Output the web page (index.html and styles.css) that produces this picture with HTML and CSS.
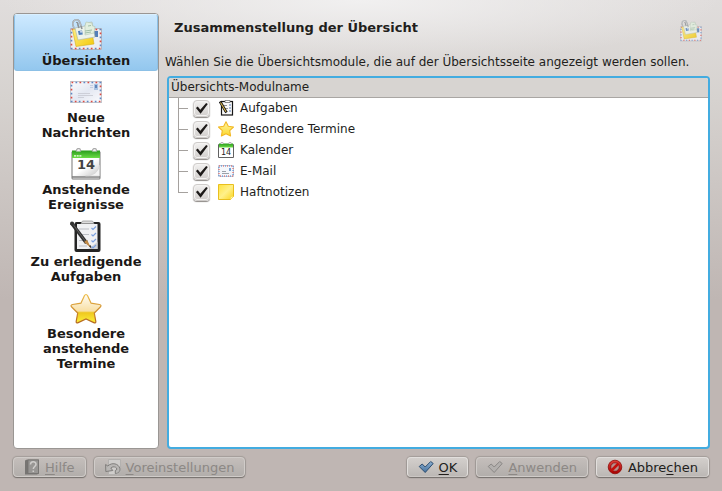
FILE: index.html
```html
<!DOCTYPE html>
<html lang="de">
<head>
<meta charset="utf-8">
<title>Zusammenstellung der Übersicht</title>
<link rel="stylesheet" href="styles.css">
</head>
<body>
<svg class="defs" aria-hidden="true">
  <defs>
    <linearGradient id="gPaper" x1="0" y1="0" x2="1" y2="1"><stop offset="0" stop-color="#fdfdfe"/><stop offset=".5" stop-color="#e4e8f2"/><stop offset="1" stop-color="#fbfbfd"/></linearGradient>
    <linearGradient id="gStar" x1="0" y1="0" x2="0" y2="1"><stop offset="0" stop-color="#fffdf4"/><stop offset=".58" stop-color="#f8dfa4"/><stop offset=".64" stop-color="#efc81e"/><stop offset="1" stop-color="#fcf03c"/></linearGradient>
    <linearGradient id="gStarEdge" x1="0" y1="0" x2="0" y2="1"><stop offset="0" stop-color="#eebd48"/><stop offset="1" stop-color="#b4661c"/></linearGradient>
    <linearGradient id="gStarSmall" x1="0" y1="0" x2="0" y2="1"><stop offset="0" stop-color="#fff3a0"/><stop offset="1" stop-color="#fbd82a"/></linearGradient>
    <linearGradient id="gGreen" x1="0" y1="0" x2="0" y2="1"><stop offset="0" stop-color="#2a9c1c"/><stop offset="1" stop-color="#6cdc46"/></linearGradient>
    <linearGradient id="gPage" x1="0" y1="0" x2="1" y2="1"><stop offset=".5" stop-color="#fff"/><stop offset="1" stop-color="#c4c4c4"/></linearGradient>
    <linearGradient id="gNote" x1="0" y1="0" x2="1" y2="1"><stop offset="0" stop-color="#ffe23c"/><stop offset=".5" stop-color="#fff08a"/><stop offset="1" stop-color="#fbd51c"/></linearGradient>
    <linearGradient id="gYellow" x1="0" y1="0" x2="1" y2="1"><stop offset="0" stop-color="#fff08c"/><stop offset="1" stop-color="#f3c908"/></linearGradient>
    <linearGradient id="gRed" x1="0" y1="0" x2="0" y2="1"><stop offset="0" stop-color="#e0403a"/><stop offset="1" stop-color="#a80000"/></linearGradient>
    <linearGradient id="gBlue" x1="0" y1="0" x2="0" y2="1"><stop offset="0" stop-color="#8fb0d0"/><stop offset="1" stop-color="#44719e"/></linearGradient>

    <symbol id="mail" viewBox="0 0 32 32">
      <rect x=".5" y="5.500" width="31" height="21" fill="url(#gPaper)" stroke="#c4c6cc"/>
      <rect x="1.500" y="6.500" width="29" height="19" fill="none" stroke="#dd4a42" stroke-width="1.600" stroke-dasharray="1.700 6.300"/>
      <rect x="1.500" y="6.500" width="29" height="19" fill="none" stroke="#5f86c4" stroke-width="1.600" stroke-dasharray="1.700 6.300" stroke-dashoffset="4"/>
      <path d="M24 8h4v6h-4z" fill="#a9c3e2"/><path d="M25 9h2v3h-2z" fill="#5f86ba"/><path d="M20 9.500h3M20 11.500h3" stroke="#b9c8de" stroke-width=".8"/>
      <path d="M8 17.500h12M8 19.500h15M8 21.500h6" stroke="#c6c8d0" stroke-width=".8"/>
    </symbol>

    <symbol id="overview" viewBox="0 0 32 32">
      <path d="M.5 9.500h31v21H.5z" fill="#eceef2" stroke="#b4b6bc"/>
      <path d="M1.500 10.500h29v19h-29z" fill="none" stroke="#dd4a42" stroke-width="1.600" stroke-dasharray="1.700 6.300"/>
      <path d="M1.500 10.500h29v19h-29z" fill="none" stroke="#5f86c4" stroke-width="1.600" stroke-dasharray="1.700 6.300" stroke-dashoffset="4"/>
      <path d="M24 12h4v6h-4z" fill="#547fb8"/>
      <path d="M2.500 10.500 6 27.500 24 25 21 8z" fill="url(#gYellow)" stroke="#d5ae1c" stroke-width=".6"/>
      <path d="m5 9 3 12 17-3-3-15-6 1-1 3z" fill="#edf3ea" stroke="#a9b6a9" stroke-width=".6"/>
      <path d="m15 7 1-4 6 1 .5 3 2.500.5L24 14l-9 2z" fill="#e2efdf" stroke="#aabfab" stroke-width=".5"/>
      <path d="m15 12 7-1M15 14l6-1M18 7l3-.5" stroke="#8eb399" stroke-width=".8"/>
      <path d="m8 12 4-.6.800 4-4 .7z" fill="#4f7fbb"/><path d="m10 12 1.800-.3.400 1.800-1.900.3z" fill="#c8d8ec"/>
      <path d="M4 9C1 3 4 .8 7 .8S10 4 11 7l1 3M6.500 4C7 3 8 4 8 6l1 3" fill="none" stroke="#8d9296" stroke-width="1.600"/>
      <path d="M4 9C1 3 4 .8 7 .8S10 4 11 7" fill="none" stroke="#dfe3e6" stroke-width=".6"/>
    </symbol>

    <symbol id="calendar" viewBox="0 0 32 32">
      <rect x="1.500" y="3" width="29" height="28.500" rx="1.500" fill="#777" />
      <path d="M2.500 9h27v19h-27z" fill="url(#gPage)"/>
      <path d="M2.500 29h27M2.500 30.400h27" stroke="#dcdcdc" stroke-width=".7"/>
      <path d="M2 2.500h28V10H2z" fill="url(#gGreen)"/>
      <path d="M29.500 17c-1 7-6 11-14 11h14z" fill="#f4f4f4" stroke="#cfcfcf" stroke-width=".5"/>
      <path d="M4 7.800h8" stroke="#c9f3b9" stroke-width="1.800" stroke-dasharray="2 .7"/>
      <path d="M6.500 3.500v-1a2 2 0 0 1 4 0v1M22.500 3.500v-1a2 2 0 0 1 4 0v1" fill="#eee" stroke="#a9a9a9" stroke-width="1.200"/>
      <text x="16" y="21" class="day">14</text>
    </symbol>

    <symbol id="calendar-small" viewBox="0 0 16 16">
      <path d="M.5 2.500h15v13H.5z" fill="#fff" stroke="#626262"/>
      <path d="M1 1.500h14v4H1z" fill="url(#gGreen)"/>
      <path d="M3 2V.5h2V2M11 2V.5h2V2" fill="#fff" stroke="#aaa" stroke-width=".8"/>
      <text x="8" y="13" class="day-small">14</text>
    </symbol>

    <symbol id="tasks" viewBox="0 0 32 32">
      <rect x="4.500" y="2" width="26" height="30" rx="2" fill="#242424"/>
      <path d="M7 4h20.500v25H7z" fill="#f0f1f3"/>
      <path d="m18 29 9.500-7V29z" fill="#d0d2d5"/>
      <path d="M11 3.500 12.500 1h10L24 3.500z" fill="#ddd" stroke="#9a9a9a" stroke-width=".8"/>
      <path d="M9 9h10M11 14.500h8M9 20.500h9M9 26h8" stroke="#b5b9bf" stroke-width=".9"/>
      <path d="m21.500 8 1.500 1.500L26 6.500m-4.500 8L23 16l3-3m-4.500 7.500L23 22l3-3m-4.500 7.500L23 28l3-3" fill="none" stroke="#7aa0df" stroke-width="1.200"/>
      <path d="m1.500 3 15 20" stroke="#2e2e2e" stroke-width="3.600"/>
      <path d="m2.500 3.500 13 18" stroke="#6d6d6d" stroke-width=".8"/>
      <circle cx="2" cy="3.500" r="2" fill="#333"/>
      <path d="m14 22 3-2.300 4.200 8.600z" fill="#c08a48"/><path d="m19 26 1.500-1 .9 3.500z" fill="#222"/>
    </symbol>

    <symbol id="tasks-small" viewBox="0 0 16 16">
      <rect x="3.500" y="1.500" width="11" height="13.500" fill="#fafafa" stroke="#161616" stroke-width="1.200"/>
      <path d="M7 .5h5v2H7z" fill="#fff" stroke="#666" stroke-width=".7"/>
      <path d="M6 5.500h3M6 8.500h4M6 11.500h3" stroke="#959595"/><path d="M11 5h2M11 8h2M11 11h2" stroke="#587cb6"/>
      <path d="m2 1.500 6.500 11" stroke="#111" stroke-width="2.600"/><path d="m2.500 2.500 5.500 9.300" stroke="#d9b64f" stroke-width="1.100"/>
    </symbol>

    <symbol id="star" viewBox="0 0 32 32">
      <path d="M16 2.500c.7 0 1.200.5 1.600 1.300l3.500 7.400 8.300 1.300c1.700.3 2.100 1.300.9 2.500l-6 6 1.500 8.300c.3 1.600-.6 2-2 1.300L16 27l-7.800 3.600c-1.400.7-2.300.3-2-1.300L7.700 21l-6-6c-1.200-1.200-.8-2.200.9-2.500l8.300-1.300 3.500-7.400c.4-.8.900-1.300 1.600-1.300z" fill="url(#gStar)" stroke="url(#gStarEdge)" stroke-width="1.200"/>
    </symbol>

    <symbol id="star-small" viewBox="0 0 16 16">
      <path d="m8 .8 2.300 4.400 5.200.8-3.800 3.700.9 5.300L8 12.800 3.400 15l.9-5.300L.5 6l5.200-.8z" fill="url(#gStarSmall)" stroke="#f2b824" stroke-width="1.100" stroke-linejoin="round"/>
    </symbol>

    <symbol id="mail-small" viewBox="0 0 16 16">
      <path d="M.5 2.500h15v11H.5z" fill="#f5f7fb" stroke="#c0cbdc"/>
      <path d="M1 3h14v10H1z" fill="none" stroke="#dd4a42" stroke-dasharray="1 3"/>
      <path d="M1 3h14v10H1z" fill="none" stroke="#4a7cc4" stroke-dasharray="1 3" stroke-dashoffset="2"/>
      <path d="M11 5h2v3h-2z" fill="#74a2d8"/><path d="M4 8.500h4M4 10.500h7" stroke="#858b97" stroke-width=".8"/>
    </symbol>

    <symbol id="note" viewBox="0 0 16 16">
      <path d="M.5.500h15v12l-3 3H.5z" fill="url(#gNote)" stroke="#e9bf1e"/><path d="m12.500 15.500.5-2.500 2.500-.5z" fill="#fff5ae"/>
    </symbol>

    <symbol id="check" viewBox="0 0 16 16"><path d="m1.200 7.500 3-2.500 3 3 5.500-5.500 2.500 2-8 9z" stroke-linejoin="round"/></symbol>
  </defs>
</svg>

<div class="dialog">
  <div class="content">
    <nav class="sidebar">
      <a class="page current" href="#uebersichten" aria-current="page"><svg class="icon-large"><use href="#overview"/></svg>Übersichten</a>
      <a class="page" href="#nachrichten"><svg class="icon-large"><use href="#mail"/></svg>Neue<br>Nachrichten</a>
      <a class="page" href="#ereignisse"><svg class="icon-large"><use href="#calendar"/></svg>Anstehende<br>Ereignisse</a>
      <a class="page" href="#aufgaben"><svg class="icon-large"><use href="#tasks"/></svg>Zu erledigende<br>Aufgaben</a>
      <a class="page" href="#termine"><svg class="icon-large"><use href="#star"/></svg>Besondere<br>anstehende<br>Termine</a>
    </nav>
    <main class="main">
      <header class="title-row">
        <h1>Zusammenstellung der Übersicht</h1>
        <svg class="icon-medium"><use href="#overview"/></svg>
      </header>
      <p class="intro">Wählen Sie die Übersichtsmodule, die auf der Übersichtsseite angezeigt werden sollen.</p>
      <div class="list">
        <table class="modules">
          <thead><tr><th>Übersichts-Modulname</th></tr></thead>
          <tbody>
            <tr><td><label class="module"><input type="checkbox" checked><svg class="icon-small"><use href="#tasks-small"/></svg>Aufgaben</label></td></tr>
            <tr><td><label class="module"><input type="checkbox" checked><svg class="icon-small"><use href="#star-small"/></svg>Besondere Termine</label></td></tr>
            <tr><td><label class="module"><input type="checkbox" checked><svg class="icon-small"><use href="#calendar-small"/></svg>Kalender</label></td></tr>
            <tr><td><label class="module"><input type="checkbox" checked><svg class="icon-small"><use href="#mail-small"/></svg>E-Mail</label></td></tr>
            <tr><td><label class="module"><input type="checkbox" checked><svg class="icon-small"><use href="#note"/></svg>Haftnotizen</label></td></tr>
          </tbody>
        </table>
      </div>
    </main>
  </div>
  <footer class="buttons">
    <button type="button" disabled><svg class="icon-small" viewBox="0 0 16 16"><path d="M1 1.500 3 .5h12v14l-2 1H1z" fill="#777573"/><path d="M4 1h10.500v13.500H4z" fill="#989694" stroke="#73716f" stroke-width=".8"/><path d="M6.500 5.500C6.500 2 12 2 12 5.200 12 7.500 9.300 7.500 9.300 10M9.300 11.500v1.500" fill="none" stroke="#d0cecc" stroke-width="1.500"/></svg><span><u>H</u>ilfe</span></button>
    <button type="button" disabled><svg class="icon-small" viewBox="0 0 16 16"><path d="M3.500.5h12v12l-3 3h-9z" fill="#cfcdcb" stroke="#b3b1af"/><path d="M.6 5.500 2.800 7c4-4 11-2.500 12 2.500.5 3-1.500 5-4.500 5v-3c2-.3 2-2.500.2-3.300-1.700-.8-3.500-.3-4.700.8l2 2.500-7 1z" fill="#b9b7b5" stroke="#7f7d7b"/></svg><span><u>V</u>oreinstellungen</span></button>
    <span class="spacer"></span>
    <button type="button"><svg class="icon-small check-ok"><use href="#check"/></svg><span><u>O</u>K</span></button>
    <button type="button" disabled><svg class="icon-small check-off"><use href="#check"/></svg><span><u>A</u>nwenden</span></button>
    <button type="button"><svg class="icon-small" viewBox="0 0 16 16"><circle cx="8" cy="8" r="6.800" fill="url(#gRed)" stroke="#8d0b08" stroke-width=".8"/><circle cx="8" cy="8" r="4.200" fill="#b8908c" stroke="#7d0000" stroke-width=".6"/><path d="m4.500 11.500 7-7" stroke="#c3100c" stroke-width="2.600"/></svg><span>Abbre<u>c</u>hen</span></button>
  </footer>
</div>
</body>
</html>
```
FILE: styles.css
```css
* { box-sizing: border-box; }

body {
  margin: 0;
  font: 13px/15px "DejaVu Sans", sans-serif;
  color: #221e1c;
  background:
    radial-gradient(ellipse 360px 64px at 50% 0, #f1f0f0, transparent),
    linear-gradient(#e0dddc, #d6d2cf 100px, #bfb6b3 300px);
  background-color: #bfb6b3;
  background-repeat: no-repeat;
}

.defs { position: absolute; width: 0; height: 0; }

.dialog {
  display: flex;
  flex-direction: column;
  gap: 8px;
  min-height: 100vh;
  padding: 13px 13px 14px;
}

.content { display: flex; flex: 1; gap: 8px; }

.sidebar {
  flex: none;
  width: 146px;
  padding: 1px;
  background: #fff;
  border: 1px solid #9a9693;
  border-radius: 4px;
}

.page {
  display: block;
  padding: 4px 0 3px;
  color: #1b1816;
  font-weight: bold;
  text-align: center;
  text-decoration: none;
  border-top: 1px solid transparent;
}

.current {
  margin: -1px -1px 0;
  background: linear-gradient(#cde9ff, #93c7ee);
  border: 1px solid #8cc0e6;
  border-top-color: #d9efff;
  border-radius: 3px;
  padding-bottom: 2px;
}

.icon-large { display: block; width: 32px; height: 32px; margin: 0 auto 2px; }
.icon-medium { width: 22px; height: 22px; opacity: .8; }
.icon-small { flex: none; width: 16px; height: 16px; }

.day { font: bold 13px "DejaVu Sans", sans-serif; fill: #444; text-anchor: middle; }
.day-small { font: 8px "DejaVu Sans", sans-serif; fill: #222; text-anchor: middle; }

.main {
  display: flex;
  flex: 1;
  flex-direction: column;
  min-width: 0;
  margin-right: -1px;
  font-size: 12px;
}

.title-row {
  display: flex;
  align-items: center;
  justify-content: space-between;
  height: 36px;
  padding: 0 8px 0 7px;
}

h1 { margin: 0 0 8px; font-size: 13px; line-height: 15px; }

.intro { margin: 6px -4px 6px -2px; white-space: nowrap; }

.list {
  flex: 1;
  background: #fff;
  border: 2px solid #43ace0;
  border-radius: 4px;
  overflow: hidden;
}

.modules { width: 100%; border-collapse: collapse; }

th {
  height: 19px;
  padding: 0 2px;
  font-weight: normal;
  text-align: left;
  background: #d7d4d1;
  border-bottom: 1px solid #a9a6a3;
}

td { position: relative; height: 21px; padding: 0 0 0 24px; }

td::before,
td::after { position: absolute; content: ""; background: #a5a19e; }
td::before { top: 0; left: 9px; width: 1px; height: 100%; }
td::after { top: 10px; left: 9px; width: 10px; height: 1px; }
tr:last-child td::before { height: 11px; }

.module { display: flex; align-items: center; height: 21px; }
.module .icon-small { margin: 0 6px 0 8px; }

input {
  appearance: none;
  flex: none;
  width: 17px;
  height: 17px;
  margin: 0;
  border: 1px solid #cfccca;
  border-radius: 4px;
  background: linear-gradient(#f2f1f0, #d2cfcd);
  box-shadow: inset 0 0 0 1px #f4f3f2, 0 1px 1px #8e8a87;
}

input:checked::before {
  display: block;
  width: 15px;
  height: 15px;
  content: "";
  background: #1d1a19;
  clip-path: polygon(13% 50%, 25% 40%, 42% 62%, 81% 16%, 92% 24%, 44% 88%);
}

.buttons { display: flex; gap: 8px; }
.spacer { flex: 1; }

button {
  display: flex;
  align-items: center;
  gap: 5px;
  height: 20px;
  padding: 0 10px;
  font: inherit;
  color: inherit;
  background: linear-gradient(#d3cfcc, #bcb8b5);
  border: 1px solid #e2dfdd;
  border-bottom-color: #cbc7c4;
  border-radius: 4px;
  box-shadow: 0 1px 1px #76716e, 0 0 1px 1px #a39d99;
}

button:disabled {
  color: #8c8885;
  background: linear-gradient(#c4bebb, #b2aeab);
  border-color: #d0ccc9;
}

u { text-underline-offset: 2px; }

.check-ok { fill: url(#gBlue); stroke: #2c4d70; }
.check-off { fill: #b3b0ae; stroke: #8a8785; }
```
